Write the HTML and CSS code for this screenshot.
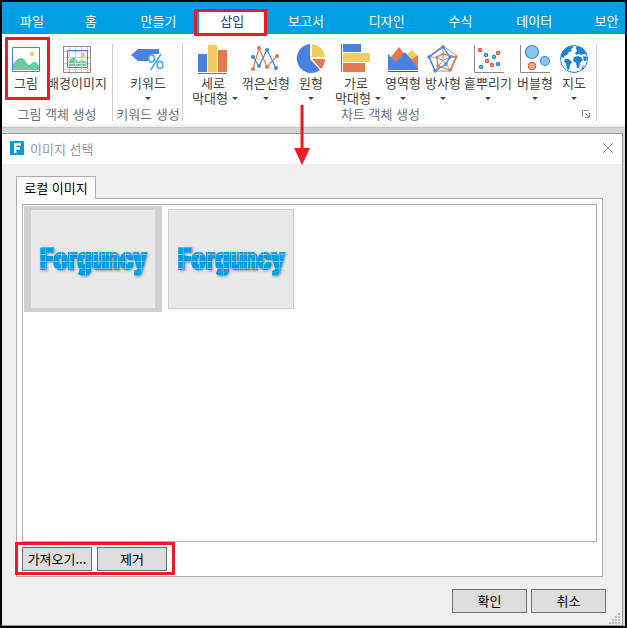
FILE: index.html
```html
<!DOCTYPE html>
<html lang="ko">
<head>
<meta charset="utf-8">
<title>이미지 선택</title>
<link rel="stylesheet" href="styles.css">
</head>
<body>
<div class="app">
  <nav class="tabs">
    <a class="tab" href="#">파일</a>
    <a class="tab" href="#">홈</a>
    <a class="tab" href="#">만들기</a>
    <a class="tab tab-active" href="#">삽입</a>
    <a class="tab" href="#">보고서</a>
    <a class="tab" href="#">디자인</a>
    <a class="tab" href="#">수식</a>
    <a class="tab" href="#">데이터</a>
    <a class="tab" href="#">보안</a>
  </nav>

  <section class="ribbon">
    <div class="group group-image">
      <div class="tools">
        <button class="tool w48">
          <svg class="icon" viewBox="0 0 34 31"><path fill="#fff" stroke="#4a7fe0" d="M3.500 3.500h27v24h-27z"/><circle cx="23" cy="10" r="2.200" fill="#efca5a"/><path fill="#69cba0" d="M4 26v-6c3-4 5-6 8-6 4 0 5 5 8 7 2 0 2-3 5-3s4 2 5 4v4z"/></svg>
          <span>그림</span>
        </button>
        <button class="tool w54">
          <svg class="icon" viewBox="0 0 34 31"><path fill="#fff" d="M3 2h28v27H3z"/><path fill="none" stroke="#cfcfcf" d="M4 7.500h26M4 13.500h26M4 19.500h26M4 25.500h26M9.500 3v25M15.500 3v25M21.500 3v25M27.500 3v25"/><path fill="none" stroke="#8e8e8e" d="M3.500 2.500h27v26h-27z"/><path fill="none" stroke="#4a7fe0" d="M7.500 6.500h20v17h-20z"/><circle cx="23" cy="11" r="2.200" fill="#efca5a"/><path fill="#69cba0" d="M9 22v-5c5-6 6-3 9 1 3-2 5-2 8 0v4z"/><path stroke="#cfe8dc" d="M15.500 15v7M21.500 17v5M9 19.500h17"/></svg>
          <span>배경이미지</span>
        </button>
      </div>
      <div class="group-name">그림 객체 생성</div>
    </div>

    <div class="group">
      <div class="tools">
        <button class="tool w66">
          <svg class="icon" viewBox="0 0 34 31"><path fill="#4a82e4" d="M0 11l7-6h21v5h-6l-5 3v4H7z"/><g fill="none" stroke="#3aaef0" stroke-width="1.600"><ellipse cx="20.500" cy="14.500" rx="2.800" ry="3.600"/><ellipse cx="29" cy="21" rx="2.800" ry="3.600"/><path d="M30 10L19.500 26"/></g></svg>
          <span>키워드</span><i class="arrow"></i>
        </button>
      </div>
      <div class="group-name">키워드 생성</div>
    </div>

    <div class="group group-chart">
      <div class="tools">
        <button class="tool w52">
          <svg class="icon" viewBox="0 0 34 31"><path fill="#4a82e4" d="M2 10h9v18H2z"/><path fill="#f0cd5c" d="M12 1h9v27h-9z"/><path fill="#e07852" d="M22 6h9v22h-9z"/><path stroke="#777" d="M2 29.500h29"/></svg>
          <span>세로</span><span class="label-row">막대형<i class="arrow arrow-inline"></i></span>
        </button>
        <button class="tool w54">
          <svg class="icon" viewBox="0 0 34 31"><g fill="none" stroke-width="1.200"><path stroke="#e07852" d="M4 25L10 4l8 19 10-11"/><path stroke="#4a82e4" d="M4 13l6 9 8-16 9 18"/></g><g fill="#e07852"><circle cx="4" cy="25" r="2"/><circle cx="10" cy="4" r="2"/><circle cx="18" cy="23" r="2"/><circle cx="28" cy="12" r="2"/></g><g fill="#4a82e4"><circle cx="4" cy="13" r="2"/><circle cx="10" cy="22" r="2"/><circle cx="18" cy="6" r="2"/><circle cx="27" cy="24" r="2"/></g></svg>
          <span>꺾은선형</span><i class="arrow"></i>
        </button>
        <button class="tool w36">
          <svg class="icon" viewBox="0 0 34 31"><path fill="#4a82e4" d="M16 15V0A14.500 14.500 0 1 0 26 26z"/><path fill="#f0cd5c" d="M18 0a14 14 0 0 1 13 13H18z"/><path fill="#e07852" d="M18 15h13a14 14 0 0 1-4 10z"/></svg>
          <span>원형</span><i class="arrow"></i>
        </button>
        <button class="tool w54">
          <svg class="icon" viewBox="0 0 34 31"><path stroke="#777" d="M2.500 0v28"/><path fill="#4a82e4" d="M4 0h18v8H4z"/><path fill="#f0cd5c" d="M4 9h27v9H4z"/><path fill="#e07852" d="M4 19h22v9H4z"/></svg>
          <span>가로</span><span class="label-row">막대형<i class="arrow arrow-inline"></i></span>
        </button>
        <button class="tool w40">
          <svg class="icon" viewBox="0 0 34 31"><path fill="#f0cd5c" d="M19 12l7-6 6 6v10H20z"/><path fill="#e07852" d="M5 13L13 3l8 10 6 2 5-4v12H8z"/><path fill="#4a82e4" d="M2 26V10l8 8 9-10 13 16v2z"/><path stroke="#555" d="M2 27.500h30"/></svg>
          <span>영역형</span><i class="arrow"></i>
        </button>
        <button class="tool w40">
          <svg class="icon" viewBox="0 0 34 31"><g fill="none"><path stroke="#999" d="M17 2L3 12l6 15h16l6-15zM17 2v14M3 12l14 4 14-4M9 27l8-11 8 11"/><path stroke="#4a82e4" stroke-width="1.300" d="M17 3l7 10-4 7-11 7L3 13z"/><path stroke="#e07852" stroke-width="1.300" d="M17 10l13 3-6 13-12-4-1-9z"/></g><g fill="#4a82e4"><circle cx="17" cy="3" r="1.700"/><circle cx="3" cy="13" r="1.700"/><circle cx="9" cy="27" r="1.700"/><circle cx="20" cy="20" r="1.700"/><circle cx="24" cy="13" r="1.700"/></g><g fill="#e07852"><circle cx="17" cy="10" r="1.500"/><circle cx="30" cy="13" r="1.700"/><circle cx="24" cy="26" r="1.700"/><circle cx="12" cy="22" r="1.700"/><circle cx="11" cy="13" r="1.500"/></g></svg>
          <span>방사형</span><i class="arrow"></i>
        </button>
        <button class="tool w50">
          <svg class="icon" viewBox="0 0 34 31"><path fill="none" stroke="#888" d="M3.500 1v27.500H33"/><g fill="#f0a080" stroke="#d9532c" stroke-width="1.200"><circle cx="9" cy="6" r="1.600"/><circle cx="27" cy="9" r="1.600"/><circle cx="16" cy="17" r="1.600"/><circle cx="21" cy="21" r="1.600"/></g><g fill="#7fc4f2" stroke="#1e88d4" stroke-width="1.200"><circle cx="15" cy="11" r="1.600"/><circle cx="23" cy="13" r="1.600"/><circle cx="27" cy="20" r="1.600"/><circle cx="10" cy="23" r="1.600"/></g></svg>
          <span>흩뿌리기</span><i class="arrow"></i>
        </button>
        <button class="tool w44">
          <svg class="icon" viewBox="0 0 34 31"><path fill="none" stroke="#888" d="M2.500 1v27.500H32"/><g fill="#8cc4ec" stroke="#2a8ddb" stroke-width="1.200"><circle cx="14" cy="8" r="6.500"/><circle cx="27" cy="17" r="4.500"/></g><circle cx="14" cy="22" r="3.700" fill="#efa98c" stroke="#d9603a" stroke-width="1.200"/></svg>
          <span>버블형</span><i class="arrow"></i>
        </button>
        <button class="tool w34">
          <svg class="icon" viewBox="0 0 34 31"><circle cx="17" cy="15" r="13.500" fill="#fff" stroke="#1d83d4"/><g fill="#1d83d4"><path d="M4 11C6 5 11 2 14 2l3 1-3 2 1 2-3 1-2 3-3 1 0 2-3-1zM8 15l4 0 3 3-2 3-1 5-2-1-1-5-2-3z"/><path d="M19 3l5 0 4 4 2 4-3-1-3 1-2-1-3 1-1-2 2-2-1-2z"/><path d="M17 13l4-1 3 1 2 3-3 3-1 5-2 0-1-5-3-2zM26 12l4 1-1 4-2 0zM25 23l2-2-1 4-2 1z"/></g></svg>
          <span>지도</span><i class="arrow"></i>
        </button>
      </div>
      <div class="group-name group-name-chart"><span>차트 객체 생성</span>
        <svg class="launcher" viewBox="0 0 8 8"><path fill="none" stroke="#999" d="M.5 7V.5H7M3 3l4 4M7.500 3v4.500H3"/></svg>
      </div>
    </div>
  </section>

  <main class="dialog">
    <header class="titlebar">
      <svg class="app-icon" viewBox="0 0 14 14"><path fill="#009fe3" d="M0 0h14v14H0z"/><path fill="none" stroke="#fff" stroke-width="2.400" d="M5.200 12V3.400H11M5.200 7.500H10"/></svg>
      <h1>이미지 선택</h1>
      <button class="close" aria-label="닫기"><svg viewBox="0 0 12 12"><path stroke="#888" fill="none" d="M1 1l10 10M11 1L1 11"/></svg></button>
    </header>
    <div class="content">
      <button class="page-tab">로컬 이미지</button>
      <div class="page">
        <div class="list">
          <button class="thumb thumb-selected"><span class="logo">Forguncy</span></button>
          <button class="thumb"><span class="logo">Forguncy</span></button>
        </div>
        <div class="actions">
          <button class="btn btn-small">가져오기...</button>
          <button class="btn btn-small">제거</button>
          <div class="mark mark-actions"></div>
        </div>
      </div>
      <footer class="footer">
        <button class="btn">확인</button>
        <button class="btn">취소</button>
      </footer>
    </div>
    <svg class="grip" viewBox="0 0 12 12"><path stroke="#b4bccf" stroke-width="2" stroke-dasharray="2 1" d="M0 11h12M3 8h9M6 5h6M9 2h3"/></svg>
  </main>

  <div class="mark mark-tab"></div>
  <div class="mark mark-picture"></div>
  <svg class="pointer" viewBox="0 0 16 62"><path stroke="#ed1c24" stroke-width="3" stroke-linecap="round" d="M8 3v42"/><path fill="#ed1c24" d="M0 45h16L8 62z"/></svg>
</div>
</body>
</html>
```
FILE: styles.css
```css
* {
  box-sizing: border-box;
}

body {
  margin: 0;
  font: 13px/15px "Noto Sans CJK KR", sans-serif;
  color: #444;
}

button {
  margin: 0;
  padding: 0;
  border: 0;
  background: none;
  color: inherit;
  font: inherit;
}

.app {
  position: relative;
  display: flex;
  flex-direction: column;
  min-height: 100vh;
  border: 2px solid #000;
  background: #d4d4d4;
}

/* Main menu */
.tabs {
  display: grid;
  grid-template-columns: 12fr 36fr 82fr 54fr 94fr 54fr 108fr 40fr 108fr 37fr;
  height: 32px;
  padding-top: 10px;
  background: #009fe3;
}

.tab {
  color: #fff;
  line-height: 18px;
  text-align: center;
  text-decoration: none;
  white-space: nowrap;
}

.tab:first-child {
  grid-column: 2;
}

.tab-active {
  justify-self: center;
  width: 66px;
  background: #fff;
  color: #1f3f96;
}

/* Ribbon */
.ribbon {
  display: flex;
  height: 94px;
  padding: 10px 0 6px;
  background: linear-gradient(#fff 88px, #ededed);
  border-bottom: 1px solid #c9c9c9;
}

.group {
  display: flex;
  flex-direction: column;
  justify-content: space-between;
  padding: 0 1px 0 2px;
  border-right: 1px solid #d0d0d0;
}

.group-image {
  padding: 0;
}

.group-image .tools {
  padding-right: 8px;
}

.group-chart {
  padding: 0 5px 0 4px;
}

.tools {
  display: flex;
}

.tool {
  display: flex;
  flex-direction: column;
  align-items: center;
  justify-content: flex-start;
  white-space: nowrap;
}

.icon {
  width: 34px;
  height: 31px;
  flex: none;
}

.w34 { width: 34px; }
.w36 { width: 36px; }
.w40 { width: 40px; }
.w44 { width: 44px; }
.w48 { width: 48px; }
.w50 { width: 50px; }
.w52 { width: 52px; }
.w54 { width: 54px; }
.w66 { width: 66px; }

.arrow {
  width: 0;
  margin-top: 7px;
  border: 3px solid transparent;
  border-top-color: #444;
  border-bottom: 0;
}

.label-row {
  display: flex;
  align-items: center;
  gap: 4px;
  padding-left: 4px;
}

.arrow-inline {
  margin-top: 2px;
}

.group-name {
  color: #6b7280;
  text-align: center;
  white-space: nowrap;
}

.group-name-chart {
  display: flex;
  align-items: center;
}

.group-name-chart span {
  flex: 1;
  padding-right: 8px;
}

.launcher {
  width: 8px;
  height: 8px;
  margin-right: 1px;
}

/* Dialog */
.dialog {
  position: relative;
  display: flex;
  flex: 1;
  flex-direction: column;
  margin: 5px 2px 0 0;
  border: solid #999;
  border-width: 1px 1px 1px 0;
  background: #efefef;
}

.titlebar {
  display: flex;
  align-items: center;
  gap: 6px;
  height: 30px;
  padding: 0 8px 2px;
  background: #fff;
}

.app-icon {
  width: 14px;
  height: 14px;
}

h1 {
  flex: 1;
  margin: 0;
  color: #999;
  font-size: 13px;
  font-weight: 400;
}

.close {
  width: 12px;
  height: 12px;
}

.close svg {
  display: block;
}

.content {
  display: flex;
  flex: 1;
  flex-direction: column;
  align-items: flex-start;
  padding: 12px 16px 12px 14px;
  color: #000;
}

.page-tab {
  position: relative;
  z-index: 1;
  width: 80px;
  height: 23px;
  margin-bottom: -1px;
  padding-bottom: 2px;
  border: 1px solid #acacac;
  border-bottom: 0;
  background: #fff;
}

.page {
  display: flex;
  flex: 1;
  flex-direction: column;
  align-self: stretch;
  margin-right: 3px;
  padding: 5px;
  border: 1px solid #acacac;
  background: #fff;
}

.list {
  display: flex;
  flex: 1;
  align-items: flex-start;
  padding: 1px;
  border: 1px solid #abadb3;
}

.thumb {
  display: grid;
  place-items: center;
  width: 126px;
  height: 100px;
  margin: 3px 6px;
  border: 1px solid #d0d0d0;
  background: #e8e8e8;
}

.thumb-selected {
  width: 138px;
  height: 106px;
  margin: 0;
  border-width: 4px 7px;
}

.logo {
  padding: 0 2px;
  background:
    repeating-linear-gradient(90deg, transparent 0 7px, #8fd4f4 7px 8px),
    repeating-linear-gradient(#009fe3 0 6px, #8fd4f4 6px 7px);
  background-clip: text;
  -webkit-text-stroke: 2px #009fe380;
  color: transparent;
  filter: drop-shadow(1px 1px 1px #999);
  font: bold 29px/36px "Liberation Sans Narrow", "Roboto Condensed", "Open Sans Condensed", "DejaVu Sans Condensed", sans-serif;
}

.actions {
  position: relative;
  display: flex;
  gap: 5px;
  padding-top: 5px;
}

.btn {
  width: 75px;
  height: 24px;
  padding-bottom: 2px;
  border: 1px solid #707070;
  background: #ddd;
}

.btn-small {
  width: 70px;
}

.footer {
  display: flex;
  align-self: flex-end;
  gap: 4px;
  padding-top: 12px;
}

.grip {
  position: absolute;
  right: 1px;
  bottom: 1px;
  width: 12px;
  height: 12px;
}

/* Callouts drawn over the interface */
.mark {
  position: absolute;
  border: 3px solid #ed1c24;
  border-radius: 1px;
  pointer-events: none;
}

.mark-tab {
  top: 7px;
  left: 192px;
  width: 73px;
  height: 27px;
}

.mark-picture {
  top: 35px;
  left: 3px;
  width: 45px;
  height: 63px;
}

.mark-actions {
  top: 0;
  left: -7px;
  width: 160px;
  height: 33px;
}

.pointer {
  position: absolute;
  top: 101px;
  left: 292px;
  width: 16px;
  height: 62px;
}
```
